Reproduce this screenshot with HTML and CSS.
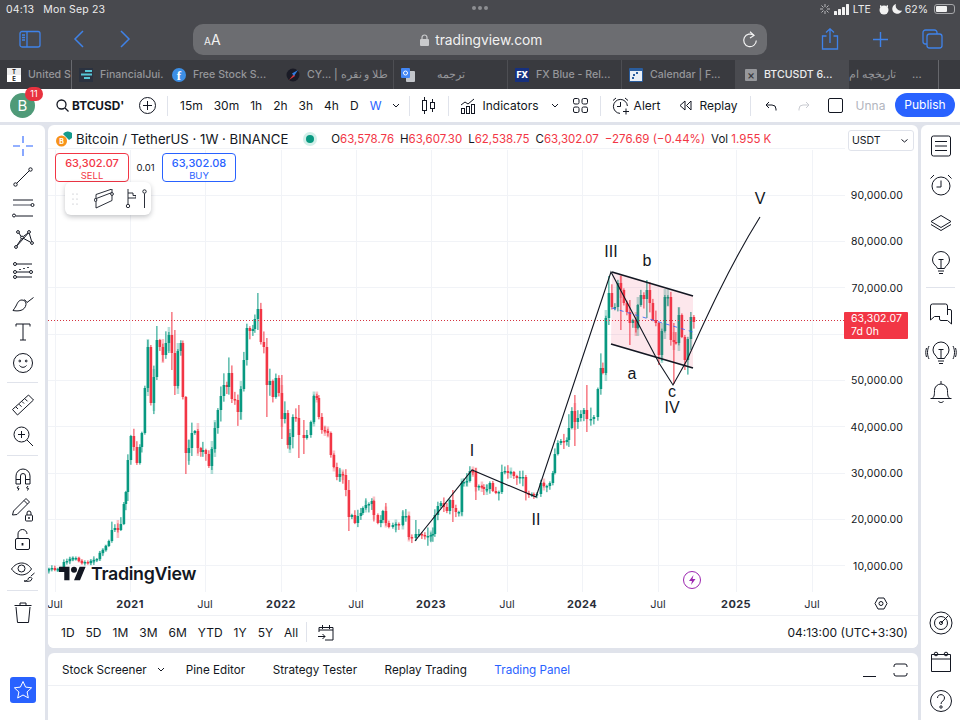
FILE: index.html
```html
<!DOCTYPE html>
<html lang="en">

<head>
    <meta charset="UTF-8">
    <meta name="viewport" content="width=device-width, initial-scale=1.0">
    <title>BTCUSDT chart</title>
    <link rel="stylesheet" href="styles.css">
</head>

<body>
    <div class="status-bar">
        <div class="status-time"><span>04:13</span><span>Mon Sep 23</span></div>
        <div class="status-dots"><i></i><i></i><i></i></div>
        <div class="status-right">
            <svg width="12" height="12" viewBox="0 0 12 12" stroke="#b8b9bc" stroke-width="1"><path d="M6 1v3M6 8v3M1 6h3M8 6h3M2.5 2.5l2 2M7.500 7.500l2 2M2.500 9.500l2-2M7.500 4.500l2-2"/></svg>
            <svg width="16" height="11" viewBox="0 0 16 11" fill="#f2f2f2"><rect x="0" y="7" width="3" height="4" rx=".5"/><rect x="4" y="5" width="3" height="6" rx=".5"/><rect x="8" y="3" width="3" height="8" rx=".5"/><rect x="12" y="0" width="3" height="11" rx=".5"/></svg>
            <span>LTE</span>
            <svg class="status-alarm" width="10" height="11" viewBox="0 0 10 11" fill="#f2f2f2"><circle cx="5" cy="6" r="4.500"/><path d="M1 1l2 1-2 2zM9 1l-2 1 2 2z"/></svg>
            <svg width="10" height="10" viewBox="0 0 10 10" fill="#f2f2f2"><path d="M4 0a5 5 0 1 0 6 6.500A5 5 0 0 1 4 0z"/></svg>
            <span>62%</span>
            <span class="battery"><i></i></span>
        </div>
    </div>

    <div class="safari-bar">
        <div class="safari-nav">
            <svg class="safari-sidebar" width="24" height="19" viewBox="0 0 24 19" fill="none" stroke="#3f82e8" stroke-width="1.300"><rect x="1" y="1.500" width="20" height="15.500" rx="2"/><path d="M8 1.500v15.500M3 5h3M3 7.500h3M3 10h3"/></svg>
            <svg class="safari-back" width="12" height="18" viewBox="0 0 12 18" fill="none" stroke="#3f82e8" stroke-width="1.500"><path d="M10 1L2 9l8 8"/></svg>
            <svg class="safari-forward" width="12" height="18" viewBox="0 0 12 18" fill="none" stroke="#3f82e8" stroke-width="1.500"><path d="M2 1l8 8-8 8"/></svg>
        </div>
        <div class="url-pill">
            <span class="url-aa"><small>A</small>A</span>
            <span class="url-host">
                <svg width="9" height="12" viewBox="0 0 9 12"><path d="M2 5V3.500a2.500 2.500 0 0 1 5 0V5" fill="none" stroke="#c9cacc" stroke-width="1.200"/><rect y="5" width="9" height="7" rx="1" fill="#c9cacc"/></svg>
                tradingview.com
            </span>
            <svg width="16" height="17" viewBox="0 0 16 17" fill="none" stroke="#f2f2f2" stroke-width="1.200"><path d="M12 4.500A6.300 6.300 0 1 0 14.300 9.500"/><path d="M8 .8l4 3.700-4 2.500"/></svg>
        </div>
        <div class="safari-actions">
            <svg width="18" height="22" viewBox="0 0 18 22" fill="none" stroke="#3f82e8" stroke-width="1.300"><path d="M5.500 8H1.500v13h15V8h-4M9 15V1M5 4.500L9 .8l4 3.700"/></svg>
            <svg width="17" height="17" viewBox="0 0 17 17" stroke="#3f82e8" stroke-width="1.400"><path d="M8.500 1v15M1 8.500h15"/></svg>
            <svg width="21" height="20" viewBox="0 0 21 20" fill="none" stroke="#3f82e8" stroke-width="1.300"><rect x="5" y="5" width="15" height="14" rx="2.500"/><path d="M5 15H3.500A2.500 2.500 0 0 1 1 12.500v-9A2.500 2.500 0 0 1 3.500 1h9A2.500 2.500 0 0 1 15 3.500V5"/></svg>
        </div>
    </div>

    <div class="tab-strip">
        <div class="tab tab-first">
            <span class="fav fav-te"><b>T</b><b>E</b></span>
            <span class="tab-text">United S</span>
        </div>
        <div class="tab tab-narrow">
            <svg class="fav" width="14" height="14" viewBox="0 0 14 14"><rect width="14" height="14" fill="#2b3240"/><path d="M6 2h7v2H6zM2 5.500h11v2H2zM5 9h6v2H5z" fill="#58c6d6"/></svg>
            <span class="tab-text">FinancialJui.</span>
        </div>
        <div class="tab tab-noline">
            <span class="fav fav-f">f</span>
            <span class="tab-text">Free Stock S...</span>
        </div>
        <div class="tab tab-noline">
            <svg class="fav" width="14" height="14" viewBox="0 0 14 14"><circle cx="7" cy="7" r="6.500" fill="#1a1b26"/><path d="M3 12L8 6l1 2z" fill="#e0343a"/><path d="M12 2L6 5.500 8 8z" fill="#2f7de1"/></svg>
            <span class="tab-text">CY... | طلا و نقره</span>
        </div>
        <div class="tab">
            <svg class="fav" width="14" height="14" viewBox="0 0 14 14"><rect x="5" y="3" width="9" height="11" rx="1" fill="#c3c6cb"/><rect width="9" height="10" rx="1" fill="#4286f5"/><circle cx="4.500" cy="5" r="2" fill="none" stroke="#fff"/></svg>
            <span class="tab-text tab-center">ترجمه</span>
        </div>
        <div class="tab">
            <span class="fav fav-fx">FX</span>
            <span class="tab-text">FX Blue - Rel...</span>
        </div>
        <div class="tab">
            <svg class="fav" width="14" height="14" viewBox="0 0 14 14"><rect width="14" height="14" rx="1" fill="#2a5d9e"/><rect x="1" y="3" width="12" height="10" fill="#e8eef6"/><path d="M4 6h2v2H4zM7 4h2v2H7zM3 9h2v2H3z" fill="#2a5d9e"/></svg>
            <span class="tab-text">Calendar | F...</span>
        </div>
        <div class="tab tab-active">
            <span class="fav fav-close">×</span>
            <span class="tab-text">BTCUSDT 6...</span>
        </div>
        <div class="tab tab-last">
            <span class="tab-text tab-clip" dir="rtl">تاریخچه ام</span>
            <span class="tab-text">...</span>
        </div>
    </div>

    <div class="tv-toolbar">
        <div class="avatar">B<span class="avatar-badge">11</span></div>
        <div class="symbol">
            <svg width="13" height="13" viewBox="0 0 13 13" fill="none" stroke="#131722" stroke-width="1.300"><circle cx="5.500" cy="5.500" r="4.500"/><path d="M9 9l3.500 3.500"/></svg>
            <span class="symbol-name">BTCUSD'</span>
        </div>
        <svg class="tb-plus" width="17" height="17" viewBox="0 0 17 17" fill="none" stroke="#131722"><circle cx="8.500" cy="8.500" r="8"/><path d="M8.500 4v9M4 8.500h9"/></svg>
        <i class="tb-sep tb-sep-first"></i>
        <div class="intervals">
            <span>15m</span><span>30m</span><span>1h</span><span>2h</span><span>3h</span><span>4h</span><span>D</span><span class="is-active">W</span>
        </div>
        <svg class="tb-chevron" width="8" height="5" viewBox="0 0 8 5" fill="none" stroke="#131722"><path d="M1 1l3 3 3-3"/></svg>
        <i class="tb-sep tb-sep-a"></i>
        <svg class="tb-candles" width="13" height="19" viewBox="0 0 13 19" fill="none" stroke="#131722"><rect x=".5" y="4.500" width="4" height="10"/><path d="M2.500 1v3.500M2.500 14.500V18"/><rect x="8.500" y="6.500" width="4" height="6"/><path d="M10.500 3v3.500M10.500 12.500V16"/></svg>
        <i class="tb-sep tb-sep-b"></i>
        <svg class="tb-indicators" width="16" height="16" viewBox="0 0 16 16" fill="none" stroke="#131722"><path d="M1 7l4-3 3 2 6-5"/><rect x="1.500" y="10.500" width="3" height="5"/><rect x="6.500" y="8.500" width="3" height="7"/><rect x="11.500" y="6.500" width="3" height="9"/></svg>
        <span class="tb-label tb-indicators-label">Indicators</span>
        <svg class="tb-chevron tb-chevron-b" width="8" height="5" viewBox="0 0 8 5" fill="none" stroke="#131722"><path d="M1 1l3 3 3-3"/></svg>
        <svg class="tb-grid" width="15" height="15" viewBox="0 0 15 15" fill="none" stroke="#131722"><rect x=".5" y=".5" width="5.500" height="5.500" rx="1.500"/><rect x="9" y=".5" width="5.500" height="5.500" rx="1.500"/><rect x=".5" y="9" width="5.500" height="5.500" rx="1.500"/><rect x="9" y="9" width="5.500" height="5.500" rx="1.500"/></svg>
        <i class="tb-sep tb-sep-c"></i>
        <svg class="tb-alert" width="18" height="18" viewBox="0 0 18 18" fill="none" stroke="#131722"><path d="M8 16.400A7 7 0 1 1 15.400 9"/><path d="M8.500 5v4.500H5M1 3.500L4 1M16 3.500L13 1M14 11.500v6M11 14.500h6"/></svg>
        <span class="tb-label tb-alert-label">Alert</span>
        <svg class="tb-replay" width="13" height="11" viewBox="0 0 13 11" fill="none" stroke="#131722"><path d="M6 1L1 5.500 6 10zM12 1L7.500 5.500 12 10z"/></svg>
        <span class="tb-label tb-replay-label">Replay</span>
        <i class="tb-sep tb-sep-d"></i>
        <svg class="tb-undo" width="12" height="10" viewBox="0 0 12 10" fill="none" stroke="#131722"><path d="M4 1L1 4l3 3M1 4h6a4 4 0 0 1 4 4v1.500"/></svg>
        <svg class="tb-redo" width="12" height="10" viewBox="0 0 12 10" fill="none" stroke="#c9cbd1"><path d="M8 1l3 3-3 3M11 4H5a4 4 0 0 0-4 4v1.500"/></svg>
        <span class="tb-square"></span>
        <span class="tb-unnamed">Unna</span>
        <span class="publish">Publish</span>
    </div>

    <div class="workspace">
        <aside class="left-tools">
            <div class="tool tool-active"><svg viewBox="0 0 28 28"><path d="M14 4v7M14 17v7M4 14h7M17 14h7"/></svg></div>
            <div class="tool"><svg viewBox="0 0 28 28"><circle cx="6.500" cy="21.500" r="1.700"/><circle cx="21.500" cy="6.500" r="1.700"/><path d="M7.700 20.300L20.300 7.700"/></svg></div>
            <div class="tool"><svg viewBox="0 0 28 28"><path d="M4 6h20M7 22h17"/><path class="tool-grey" d="M4 11h18"/><circle cx="23.500" cy="11" r="1.500"/><circle cx="5" cy="21.500" r="1.500"/></svg></div>
            <div class="tool"><svg viewBox="0 0 28 28"><circle cx="9" cy="7" r="1.400"/><circle cx="20" cy="7" r="1.400"/><circle cx="13" cy="12.500" r="1.400"/><circle cx="7" cy="22" r="1.400"/><circle cx="23" cy="18" r="1.400"/><path d="M10 8l2 3.500M12.300 14L7.700 20.800M14.300 11.500L19 8M20.300 8.400L22.700 16.600M14.300 13.300L21.700 17.300M8 20.800L19.200 8.200"/></svg></div>
            <div class="tool"><svg viewBox="0 0 28 28"><circle cx="6" cy="8" r="1.500"/><circle cx="6" cy="16" r="1.500"/><circle cx="22" cy="16" r="1.500"/><circle cx="6" cy="21" r="1.500"/><path d="M7.500 8H23M7.500 16h13M7.500 21H23"/><path d="M10 13.500h2M14 12.500h2M18 11.500h2" stroke-width=".8"/></svg></div>
            <div class="tool"><svg viewBox="0 0 28 28"><path d="M4 23.500c5 1 12 .5 13-6 .3-2-1-4.500-4-4.500-3.500 0-4.500 3-6 6-.7 1.500-2 3-3 4.500zM15.500 12.500l2.500 3 6.500-5"/></svg></div>
            <div class="tool"><svg viewBox="0 0 28 28"><path d="M7 8.500V6h14v2.500M14 6v16M11 22h6"/></svg></div>
            <div class="tool"><svg viewBox="0 0 28 28"><circle cx="14" cy="14" r="9.500"/><circle cx="10.800" cy="12" r=".9"/><circle cx="17.200" cy="12" r=".9"/><path d="M10.500 16.500c1.800 2.400 5.200 2.400 7 0"/></svg></div>
            <i class="tool-sep"></i>
            <div class="tool"><svg viewBox="0 0 28 28"><path d="M3.500 18.500L19.500 4l5 5-16 15zM7 16l2 2M10 13.200l2.500 2.500M13 10.500l2 2M16 7.800l2.500 2.500"/></svg></div>
            <div class="tool"><svg viewBox="0 0 28 28"><circle cx="12.500" cy="12.500" r="7.500"/><path d="M12.500 9v7M9 12.500h7M18 18l6 6"/></svg></div>
            <i class="tool-sep"></i>
            <div class="tool"><svg viewBox="0 0 28 28"><path d="M7 20V12a7 7 0 0 1 14 0v8h-4.500v-8a2.500 2.500 0 0 0-5 0v8zM7 15.500h4.500M16.500 15.500H21M9.500 22l-1.500 2 2 .5-1 2M19 22l-1.500 2 2 .5-1 2"/></svg></div>
            <div class="tool"><svg viewBox="0 0 28 28"><path d="M3.500 20l1-4L17 3.500l3.500 3.500L8 19.500zM15 5.500l3.500 3.500"/><rect x="16.500" y="20" width="7" height="6" rx="1"/><path d="M18 20v-2a2 2 0 0 1 4 0v2"/><circle cx="20" cy="23" r=".6"/></svg></div>
            <div class="tool"><svg viewBox="0 0 28 28"><rect x="6.500" y="12.500" width="14" height="11" rx="1.500"/><path d="M9 12.500V8a4.500 4.500 0 0 1 9 0"/><path d="M13.500 17v2.500" stroke-width="1.800"/></svg></div>
            <div class="tool"><svg viewBox="0 0 28 28"><path d="M2.500 12c5.500-8 15-8 20 0-2 3-4.500 5-7.500 5.700-5 1-9.500-1.500-12.500-5.700z"/><circle cx="12.500" cy="11.500" r="3.500"/><path d="M15 24c2.500.5 4.200-1 4.500-3l2-1 1.500 1.500-1 2c-1.500 1-4 1-6.500.5zM22 19l3.500-3"/></svg></div>
            <i class="tool-sep"></i>
            <div class="tool"><svg viewBox="0 0 28 28"><path d="M7 8l1.500 15.500h11L21 8M5.500 6.500h17M11 6.500V4h6v2.500"/></svg></div>
            <div class="star-btn"><svg width="20" height="20" viewBox="0 0 20 20" fill="none" stroke="#fff"><path d="M10 1.500l2.600 5.600 6 .7-4.500 4.100 1.200 6L10 15l-5.300 3 1.200-6L1.400 7.800l6-.7z"/></svg></div>
        </aside>

        <main class="center">
            <section class="chart-pane">
                <svg class="chart" id="chart" viewBox="48 125 870 491" width="870" height="491">
                    <g class="grid">
                        <path d="M55.500 150V592M130.500 150V592M205.500 150V592M281.500 150V592M356.500 150V592M431.500 150V592M507.500 150V592M582.500 150V592M658.500 150V592M736.500 150V592M812.500 150V592"/>
                        <path d="M48 148.500H845M48 195.500H845M48 241.500H845M48 287.500H845M48 334.500H845M48 380.500H845M48 426.500H845M48 473.500H845M48 519.500H845M48 565.500H845"/>
                    </g>
                    <path class="axis-line" d="M48 615.500H918"/>
                    <g id="candles"></g>
                    <path class="last-line" d="M48 320.500H845"/>

                    <polygon class="channel-fill" points="612,272 693,296 693,368 611,344"/>
                    <path class="channel-mid" d="M612 308L693 332"/>
                    <path class="channel-edge" d="M612 272L693 296M611 344L693 368"/>
                    <path class="wave" d="M415 541L472 470L536 497L611 272L659 363L673 385L687 360C705 320 730 265 760 217"/>

                    <g class="wave-labels">
                        <text x="472" y="456">I</text>
                        <text x="536" y="525">II</text>
                        <text x="611" y="257">III</text>
                        <text x="647" y="266">b</text>
                        <text x="632" y="379">a</text>
                        <text x="672" y="397">c</text>
                        <text x="672" y="413">IV</text>
                        <text x="760" y="204">V</text>
                    </g>

                    <g class="price-axis">
                        <text x="903" y="199">90,000.00</text>
                        <text x="903" y="245">80,000.00</text>
                        <text x="903" y="292">70,000.00</text>
                        <text x="903" y="384">50,000.00</text>
                        <text x="903" y="431">40,000.00</text>
                        <text x="903" y="477">30,000.00</text>
                        <text x="903" y="523">20,000.00</text>
                        <text x="903" y="570">10,000.00</text>
                    </g>
                    <rect class="price-tag" x="844" y="312" width="64" height="27" rx="1"/>
                    <g class="price-tag-text">
                        <text x="851" y="322">63,302.07</text>
                        <text x="851" y="335">7d 0h</text>
                    </g>

                    <g class="time-axis">
                        <text x="55" y="608">Jul</text>
                        <text class="year" x="130" y="608">2021</text>
                        <text x="205" y="608">Jul</text>
                        <text class="year" x="281" y="608">2022</text>
                        <text x="356" y="608">Jul</text>
                        <text class="year" x="431" y="608">2023</text>
                        <text x="507" y="608">Jul</text>
                        <text class="year" x="582" y="608">2024</text>
                        <text x="658" y="608">Jul</text>
                        <text class="year" x="736" y="608">2025</text>
                        <text x="812" y="608">Jul</text>
                    </g>

                    <circle class="bolt-ring" cx="692" cy="580" r="8.500"/>
                    <path class="bolt" d="M693.500 575L689 581h3l-1 4 4.500-6h-3z"/>
                    <path class="gear" d="M878 598h6l3 5.500-3 5.500h-6l-3-5.500z"/>
                    <circle class="gear" cx="881" cy="603.500" r="2"/>
                </svg>

                <div class="legend">
                    <svg class="coin" width="17" height="17" viewBox="0 0 17 17"><path d="M7 4a6 6 0 0 1 9-1v5l-3 2z" fill="#139a8b"/><circle cx="5.500" cy="11" r="5.500" fill="#f7931a"/><text x="5.500" y="13.500" class="coin-b">B</text></svg>
                    <span class="legend-title">Bitcoin / TetherUS · 1W · BINANCE</span>
                    <span class="legend-dot"></span>
                    <span class="ohlc">
                        <span>O<b>63,578.76</b></span>
                        <span>H<b>63,607.30</b></span>
                        <span>L<b>62,538.75</b></span>
                        <span>C<b>63,302.07</b></span>
                        <b>−276.69 (−0.44%)</b>
                        <span>Vol <b>1.955 K</b></span>
                    </span>
                </div>
                <div class="currency">USDT<svg width="7" height="4" viewBox="0 0 7 4" fill="none" stroke="#131722"><path d="M.5.500l3 2.500 3-2.500"/></svg></div>

                <div class="trade-box">
                    <div class="trade-btn trade-sell"><b>63,302.07</b><span>SELL</span></div>
                    <span class="trade-spread">0.01</span>
                    <div class="trade-btn trade-buy"><b>63,302.08</b><span>BUY</span></div>
                </div>
                <div class="draw-float">
                    <svg width="6" height="12" viewBox="0 0 6 12" fill="#a9acb4"><circle cx="1" cy="1" r=".6"/><circle cx="5" cy="1" r=".6"/><circle cx="1" cy="6" r=".6"/><circle cx="5" cy="6" r=".6"/><circle cx="1" cy="11" r=".6"/><circle cx="5" cy="11" r=".6"/></svg>
                    <svg class="draw-channel" width="20" height="20" viewBox="0 0 20 20" fill="none" stroke="#131722" stroke-width=".9"><path d="M2 5.500L18 0v11.500L2 19zM18 3.500L1 10"/><circle cx="18" cy="5" r="1.400" fill="#fff"/><circle cx="1.500" cy="11" r="1.400" fill="#fff"/></svg>
                    <svg class="draw-flag" width="11" height="19" viewBox="0 0 11 19" fill="none" stroke="#131722" stroke-width=".9"><path d="M3 0v15M3 4h5v2.500h3V9H3"/><circle cx="3" cy="17" r="1.700"/></svg>
                    <svg class="draw-pin" width="5" height="19" viewBox="0 0 5 19" fill="none" stroke="#131722" stroke-width=".9"><circle cx="2.500" cy="2.500" r="1.700"/><path d="M2.500 4.500V19"/></svg>
                </div>
                <div class="tv-logo">
                    <svg width="27" height="15" viewBox="0 3 36 20" fill="#131722"><path d="M14 22H7V11H0V4h14zM28 22h-8l7.500-18h8z"/><circle cx="20" cy="8" r="4"/></svg>
                    <span>TradingView</span>
                </div>

                <div class="range-bar">
                    <span>1D</span><span>5D</span><span>1M</span><span>3M</span><span>6M</span><span>YTD</span><span>1Y</span><span>5Y</span><span>All</span>
                    <i class="range-sep"></i>
                    <svg width="16" height="17" viewBox="0 0 16 17" fill="none" stroke="#131722"><path d="M1 8V3.500h14v12.500H7M1 6h14M4.500 1v4M11.500 1v4M0 12.500h7M4.500 10L7 12.500 4.500 15"/></svg>
                    <span class="range-clock">04:13:00 (UTC+3:30)</span>
                </div>
            </section>

            <section class="panel">
                <div class="panel-tabs">
                    <span class="panel-tab panel-screener">Stock Screener</span>
                    <svg class="panel-chevron" width="8" height="5" viewBox="0 0 8 5" fill="none" stroke="#131722"><path d="M1 1l3 3 3-3"/></svg>
                    <span class="panel-tab">Pine Editor</span>
                    <span class="panel-tab">Strategy Tester</span>
                    <span class="panel-tab">Replay Trading</span>
                    <span class="panel-tab is-active">Trading Panel</span>
                    <i class="panel-min"></i>
                    <svg class="panel-max" width="15" height="14" viewBox="0 0 15 14" fill="none" stroke="#131722"><path d="M1 4V3a2 2 0 0 1 2-2h9a2 2 0 0 1 2 2v1M1 10v1a2 2 0 0 0 2 2h9a2 2 0 0 0 2-2v-1"/></svg>
                </div>
                <h2 class="panel-heading">Connect through trusted brokers</h2>
            </section>
        </main>

        <aside class="right-tools">
            <div class="rtool"><svg viewBox="0 0 24 24"><rect x="2.500" y="2" width="19" height="20" rx="2"/><path d="M6 7.500h12M6 12h12M6 16.500h12"/></svg></div>
            <div class="rtool"><svg viewBox="0 0 24 24"><circle cx="12" cy="13" r="9"/><path d="M12 7.500V14H7.500M1.500 5.500L5 2M22.500 5.500L19 2"/></svg></div>
            <div class="rtool"><svg viewBox="0 0 24 24"><path d="M12 3.500L22 9.500l-10 6-10-6zM2 12.500l10 6 10-6"/></svg></div>
            <div class="rtool"><svg viewBox="0 0 24 24"><path d="M8.500 17.500C8 15 3.500 13.500 3.500 9a8.500 8.500 0 0 1 17 0c0 4.500-4.500 6-5 8.500zM9 20h6M10 22.500h4M9.500 8.500h5M12 8.500v9"/></svg></div>
            <i class="rtool-sep"></i>
            <div class="rtool"><svg viewBox="0 0 24 24"><path d="M18.500 13V4a2 2 0 0 0-2-2H3.500a2 2 0 0 0-2 2v14l4-3.500h5"/><path d="M18.500 7.500H21a1.500 1.500 0 0 1 1.500 1.500v13l-4-3.500H12a1.500 1.500 0 0 1-1.500-1.500v-3"/></svg></div>
            <div class="rtool rtool-wide"><svg viewBox="0 0 32 24"><path d="M12.500 17.500C12 15 8 13.500 8 9a8 8 0 0 1 16 0c0 4.500-4 6-4.500 8.500zM13 20h6M14 22.500h4M13.500 8.500h5M16 8.500v9M4 5C2 9 2 14 4 18M1.500 7c-1 3-1 6 0 9M28 5c2 4 2 9 0 13M30.500 7c1 3 1 6 0 9"/></svg></div>
            <div class="rtool"><svg viewBox="0 0 24 24"><path d="M3 18.500c2-1 2.500-3 2.500-8a6.500 6.500 0 0 1 13 0c0 5 .5 7 2.500 8zM1.500 18.500h21M9.500 21c.5 2 4.500 2 5 0M12 1v3"/></svg></div>
            <div class="rtool rtool-radar"><svg viewBox="0 0 24 24"><circle cx="12" cy="12" r="11"/><circle cx="12" cy="12" r="6.500"/><circle cx="12" cy="12" r="1.500"/><path d="M12 12l7-7"/></svg></div>
            <div class="rtool"><svg viewBox="0 0 24 24"><path d="M2.500 4.500h19v17h-19zM2.500 9h19"/><circle cx="7" cy="4" r="1.800"/><circle cx="17" cy="4" r="1.800"/></svg></div>
            <div class="rtool"><svg viewBox="0 0 24 24"><circle cx="12" cy="12" r="10.500"/><path d="M8.500 9c0-4.500 7-4.500 7 0 0 3-3.500 3-3.500 6"/><circle cx="12" cy="18" r="1.200"/></svg></div>
        </aside>
    </div>

    <script src="chart.js"></script>
</body>

</html>
```

FILE: styles.css
```css
* {
    margin: 0;
    padding: 0;
    box-sizing: border-box;
    font-family: Inter, "Noto Sans", "Noto Sans CJK SC", sans-serif;
}

body {
    width: 960px;
    height: 720px;
    overflow: hidden;
    background-color: #e0e3eb;
    color: #131722;
    display: flex;
    flex-direction: column;
}

i {
    display: block;
}

/* ios status bar */
.status-bar {
    height: 18px;
    background-color: #48494e;
    color: #ececed;
    font-size: 10.5px;
    display: flex;
    align-items: center;
    padding: 0 5px 0 6px;
    position: relative;
}

.status-time {
    display: flex;
    gap: 9px;
    letter-spacing: 0.2px;
}

.status-dots {
    position: absolute;
    left: 472px;
    top: 6px;
    display: flex;
    gap: 2px;
}

.status-dots i {
    width: 4px;
    height: 4px;
    border-radius: 50%;
    background-color: #8d8e92;
}

.status-right {
    margin-left: auto;
    display: flex;
    align-items: center;
    gap: 3px;
}

.status-alarm {
    margin-left: 5px;
}

.battery {
    width: 21px;
    height: 10px;
    margin-left: 3px;
    border: 1px solid #a6a7aa;
    border-radius: 3px;
    padding: 1px;
}

.battery i {
    width: 62%;
    height: 100%;
    background-color: #f2f2f2;
    border-radius: 1px;
}

/* safari chrome */
.safari-bar {
    height: 42px;
    background-color: #48494e;
    display: flex;
    align-items: center;
}

.safari-nav {
    width: 193px;
    padding-left: 19px;
    display: flex;
    align-items: center;
}

.safari-back {
    margin-left: 30px;
}

.safari-forward {
    margin-left: 34px;
}

.url-pill {
    width: 574px;
    height: 31px;
    margin-top: 1px;
    background-color: #6c6d71;
    border-radius: 10px;
    display: flex;
    align-items: center;
    justify-content: space-between;
    padding: 0 9px 0 11px;
    color: #f2f2f2;
}

.url-aa {
    font-size: 14px;
}

.url-aa small {
    font-size: 10px;
}

.url-host {
    display: flex;
    align-items: center;
    gap: 6px;
    font-size: 13.8px;
}

.safari-actions {
    flex: 1;
    display: flex;
    align-items: center;
    padding-left: 54px;
    gap: 33px;
}

.tab-strip {
    height: 29px;
    background-color: #393a3f;
    display: flex;
    font-size: 10.6px;
    font-weight: 500;
    color: #95969a;
}

.tab {
    flex: 0 0 114px;
    display: flex;
    align-items: center;
    gap: 7px;
    padding-left: 7px;
    border-left: 1px solid #4d4e53;
    overflow: hidden;
    white-space: nowrap;
}

.tab-first {
    flex-basis: 71px;
    border-left: none;
}

.tab-narrow {
    flex-basis: 94px;
    border-left-color: #68696e;
}

.tab-noline {
    border-left: none;
}

.tab-center {
    margin-left: 15px;
}

.tab-active {
    background-color: #4a4b50;
    color: #ececed;
    border-left: none;
    padding-left: 10px;
}

.tab-last {
    flex-basis: 90px;
    border-left: none;
    border-right: 1px solid #66676c;
    padding-left: 0;
    gap: 16px;
}

.tab-clip {
    width: 47px;
    overflow: hidden;
}

.fav {
    flex: none;
    width: 14px;
    height: 14px;
}

.fav-te {
    display: flex;
    flex-direction: column;
    background-color: #ececed;
    color: #222;
    font-size: 6px;
    line-height: 7px;
    text-align: center;
}

.fav-te b + b {
    background-color: #fff;
}

.fav-f {
    border-radius: 50%;
    background-color: #3d8fe6;
    color: #fff;
    font-family: "Liberation Serif", serif;
    font-weight: 700;
    font-size: 13px;
    line-height: 15px;
    text-align: center;
}

.fav-fx {
    background-color: #16307f;
    color: #fff;
    font-size: 9px;
    font-weight: 800;
    line-height: 14px;
    text-align: center;
    letter-spacing: -0.5px;
}

.fav-close {
    width: 12px;
    height: 12px;
    background-color: #97989c;
    color: #3a3b40;
    font-size: 12px;
    line-height: 12px;
    text-align: center;
    border-radius: 1px;
}

/* tradingview header */
.tv-toolbar {
    height: 33px;
    flex: none;
    background-color: #fff;
    display: flex;
    align-items: center;
    font-size: 12px;
    position: relative;
}

.avatar {
    width: 25px;
    height: 25px;
    margin-left: 10px;
    border-radius: 50%;
    background-color: #4f9a78;
    color: #fff;
    font-size: 15px;
    line-height: 25px;
    text-align: center;
    position: relative;
}

.avatar-badge {
    position: absolute;
    left: 15px;
    top: -6px;
    width: 18px;
    height: 14px;
    border-radius: 8px;
    background-color: #e8323f;
    font-size: 9px;
    line-height: 14px;
}

.symbol {
    margin-left: 21px;
    display: flex;
    align-items: center;
    gap: 3px;
}

.symbol-name {
    width: 53px;
    font-weight: 700;
    font-size: 11.8px;
    white-space: nowrap;
}

.tb-plus {
    margin-left: 14px;
}

.tb-sep {
    width: 1px;
    height: 20px;
    background-color: #e0e3eb;
}

.tb-sep-first {
    margin-left: 11px;
}

.intervals {
    margin-left: 12px;
    display: flex;
    gap: 11px;
}

.is-active {
    color: #2962ff;
}

.tb-chevron {
    margin-left: 11px;
}

.tb-sep-a {
    margin-left: 9px;
}

.tb-candles {
    margin-left: 12px;
}

.tb-sep-b {
    margin-left: 13px;
}

.tb-indicators {
    margin-left: 11px;
}

.tb-indicators-label {
    margin-left: 6px;
}

.tb-chevron-b {
    margin-left: 12px;
}

.tb-grid {
    margin-left: 14px;
}

.tb-sep-c {
    margin-left: 12px;
}

.tb-alert {
    margin-left: 11px;
}

.tb-alert-label {
    margin-left: 4px;
}

.tb-replay {
    margin-left: 19px;
}

.tb-replay-label {
    margin-left: 7px;
}

.tb-sep-d {
    margin-left: 12px;
}

.tb-undo {
    margin-left: 14px;
}

.tb-redo {
    margin-left: 21px;
}

.tb-square {
    width: 15px;
    height: 15px;
    margin-left: 18px;
    border: 1px solid #131722;
    border-radius: 2px;
}

.tb-unnamed {
    margin-left: 13px;
    white-space: nowrap;
    color: #b2b5be;
}

.publish {
    position: absolute;
    left: 895px;
    top: 4px;
    width: 60px;
    height: 24px;
    border-radius: 12px;
    background-color: #2962ff;
    color: #fff;
    line-height: 24px;
    text-align: center;
}

/* main layout */
.workspace {
    flex: 1;
    min-height: 0;
    padding-top: 3px;
    display: flex;
    gap: 3px;
}

.left-tools {
    width: 45px;
    flex: none;
    padding-top: 5px;
    background-color: #fff;
    border-top-right-radius: 6px;
    display: flex;
    flex-direction: column;
    align-items: center;
}

.tool {
    width: 28px;
    height: 31px;
    flex: none;
    display: flex;
    align-items: center;
}

.tool svg {
    width: 28px;
    height: 28px;
    fill: none;
    stroke: #131722;
}

.tool-active svg {
    stroke: #2962ff;
    stroke-width: 1.1;
}

.tool-grey {
    stroke: #8b8e96;
    stroke-width: 1.6;
}

.tool-sep {
    width: 31px;
    height: 1px;
    flex: none;
    margin: 4px 0 6px;
    background-color: #e0e3eb;
}

.star-btn {
    width: 26px;
    height: 26px;
    margin-top: auto;
    margin-bottom: 17px;
    background-color: #2962ff;
    border-radius: 3px;
    display: flex;
    align-items: center;
    justify-content: center;
}

.center {
    width: 870px;
    flex: none;
    display: flex;
    flex-direction: column;
    gap: 5px;
}

.chart-pane {
    height: 523px;
    flex: none;
    position: relative;
    background-color: #fff;
    border-radius: 6px;
    overflow: hidden;
}

.chart {
    display: block;
}

.grid path {
    fill: none;
    stroke: #f1f3f7;
    stroke-width: 1;
}

.axis-line {
    stroke: #eef0f4;
    stroke-width: 1;
}

.last-line {
    fill: none;
    stroke: #d5323f;
    stroke-width: 1;
    stroke-dasharray: 1 2;
}

.channel-fill {
    fill: rgba(242, 54, 99, 0.12);
}

.channel-mid {
    stroke: #2962ff;
    stroke-width: 1;
    stroke-dasharray: 4 4;
    opacity: 0.8;
}

.channel-edge {
    stroke: #131722;
    stroke-width: 1.8;
}

.wave {
    fill: none;
    stroke: #131722;
    stroke-width: 1.1;
}

.wave-labels text {
    font-family: "Liberation Sans", sans-serif;
    font-size: 16px;
    text-anchor: middle;
    fill: #131722;
}

.price-axis text {
    font-size: 10.5px;
    text-anchor: end;
    fill: #131722;
    letter-spacing: 0.1px;
}

.price-tag {
    fill: #f23645;
}

.price-tag-text text {
    font-size: 10.5px;
    fill: #fff;
    letter-spacing: 0.1px;
}

.time-axis text {
    font-size: 11px;
    text-anchor: middle;
    fill: #2a2e39;
}

.time-axis .year {
    font-weight: 700;
    letter-spacing: 0.4px;
}

.bolt-ring {
    fill: none;
    stroke: #9c27b0;
    stroke-width: 1;
}

.bolt {
    fill: #9c27b0;
}

.gear {
    fill: none;
    stroke: #131722;
    stroke-width: 1;
}

.legend {
    position: absolute;
    left: 8px;
    top: 5px;
    display: flex;
    align-items: center;
    white-space: nowrap;
}

.coin {
    margin-right: 3px;
}

.coin-b {
    font-size: 7px;
    font-weight: 700;
    fill: #fff;
    text-anchor: middle;
}

.legend-title {
    font-size: 13.2px;
}

.legend-dot {
    width: 8px;
    height: 8px;
    margin-left: 18px;
    border-radius: 50%;
    background-color: #089981;
    box-shadow: 0 0 0 3px #d2efe9;
}

.ohlc {
    margin-left: 17px;
    display: flex;
    gap: 6px;
    font-size: 11.5px;
}

.ohlc b {
    font-weight: 400;
    color: #f23645;
}

.currency {
    position: absolute;
    left: 800px;
    top: 5px;
    width: 66px;
    height: 21px;
    padding: 0 5px 0 3px;
    border: 1px solid #e0e3eb;
    border-radius: 3px;
    background-color: #fff;
    font-size: 10.5px;
    display: flex;
    align-items: center;
    justify-content: space-between;
}

.trade-box {
    position: absolute;
    left: 7px;
    top: 28px;
    display: flex;
    align-items: center;
}

.trade-btn {
    width: 74px;
    height: 29px;
    border: 1px solid;
    border-radius: 4px;
    background-color: #fff;
    text-align: center;
    font-size: 9.5px;
    line-height: 11px;
    padding-top: 3px;
    display: flex;
    flex-direction: column;
}

.trade-btn b {
    font-size: 11px;
    font-weight: 500;
    line-height: 13px;
}

.trade-sell {
    border-color: #f23645;
    color: #f23645;
}

.trade-buy {
    border-color: #2962ff;
    color: #2962ff;
}

.trade-spread {
    width: 33px;
    font-size: 9.5px;
    text-align: center;
}

.draw-float {
    position: absolute;
    left: 17px;
    top: 57px;
    width: 86px;
    height: 33px;
    background-color: #fff;
    border-radius: 6px;
    box-shadow: 0 2px 5px rgba(19, 23, 34, 0.25);
    display: flex;
    align-items: center;
    padding-left: 7px;
}

.draw-channel {
    margin-left: 16px;
}

.draw-flag {
    margin-left: 11px;
}

.draw-pin {
    margin-left: 6px;
}

.tv-logo {
    position: absolute;
    left: 11px;
    top: 438px;
    display: flex;
    align-items: center;
    gap: 5px;
    font-size: 17.8px;
    font-weight: 600;
    letter-spacing: -0.3px;
}

.range-bar {
    position: absolute;
    left: 0;
    right: 0;
    bottom: 0;
    height: 32px;
    padding: 0 10px 0 13px;
    display: flex;
    align-items: center;
    gap: 11px;
    font-size: 12px;
    background-color: #fff;
}

.range-sep {
    width: 1px;
    height: 20px;
    margin-left: -3px;
    background-color: #e0e3eb;
}

.range-clock {
    margin-left: auto;
}

.panel {
    flex: 1;
    min-height: 0;
    background-color: #fff;
    border-radius: 6px 6px 0 0;
    overflow: hidden;
}

.panel-tabs {
    height: 33px;
    padding: 1px 0 0 14px;
    border-bottom: 1px solid #eef0f4;
    display: flex;
    align-items: center;
    gap: 27.5px;
    font-size: 11.7px;
    position: relative;
}

.panel-screener {
    margin-right: -17px;
}

.panel-chevron {
    margin-right: -7px;
}

.panel-min {
    width: 13px;
    height: 1px;
    margin-left: auto;
    margin-top: 13px;
    background-color: #131722;
}

.panel-max {
    margin-left: -10px;
    margin-right: 10px;
}

.panel-heading {
    margin-top: 30px;
    font-size: 20px;
    font-weight: 600;
    text-align: center;
}

/* right rail */
.right-tools {
    flex: 1;
    padding-top: 1px;
    background-color: #fff;
    border-top-left-radius: 6px;
    display: flex;
    flex-direction: column;
    align-items: center;
}

.rtool {
    height: 39px;
    flex: none;
    display: flex;
    align-items: center;
}

.rtool svg {
    width: 24px;
    height: 24px;
    fill: none;
    stroke: #131722;
    stroke-width: 1;
}

.rtool-wide svg {
    width: 32px;
}

.rtool-sep {
    width: 29px;
    height: 1px;
    flex: none;
    margin: 5px 0 6px;
    background-color: #e0e3eb;
}

.rtool-radar {
    margin-top: auto;
}
```

FILE: chart.js
```js
// weekly candles: [x, close] in chart pixels, each one opens at the previous close
const closes = [
    [48, 569], [51, 568], [54, 570], [57, 569], [60, 568], [63, 562], [66, 561], [69, 559], [72, 558], [75, 558],
    [78, 561], [81, 563], [84, 562], [87, 563], [90, 561], [93, 560], [96, 559], [99, 553], [102, 550], [105, 546],
    [108, 541], [111, 530], [114, 528], [117, 530], [120, 524], [123, 504], [125, 492], [127, 460], [130, 436], [133, 447],
    [136, 463], [139, 447], [141, 433], [144, 388], [147, 347], [150, 403], [153, 377], [156, 340], [159, 347], [162, 355],
    [165, 343], [168, 335], [171, 353], [174, 386], [177, 351], [180, 343], [182, 397], [185, 453], [188, 448], [191, 433],
    [194, 431], [197, 448], [200, 452], [202, 450], [205, 454], [208, 466], [211, 449], [214, 428], [217, 410], [220, 396],
    [223, 385], [226, 387], [228, 373], [231, 399], [234, 400], [237, 412], [240, 389], [243, 360], [246, 328], [249, 331],
    [252, 329], [254, 319], [257, 309], [260, 342], [263, 347], [266, 385], [269, 381], [272, 397], [275, 378], [278, 393],
    [281, 419], [284, 413], [287, 445], [289, 437], [292, 417], [295, 418], [298, 435], [303, 438], [306, 435], [310, 422],
    [313, 396], [316, 398], [318, 417], [321, 430], [324, 431], [327, 433], [330, 455], [333, 467], [336, 477], [339, 474],
    [342, 475], [345, 490], [348, 517], [351, 515], [354, 523], [357, 516], [360, 513], [362, 508], [365, 505], [368, 504],
    [371, 501], [373, 515], [377, 523], [380, 520], [382, 511], [385, 523], [388, 527], [392, 525], [395, 524], [398, 525],
    [402, 516], [405, 516], [408, 537], [411, 538], [415, 534], [418, 534], [421, 535], [424, 536], [427, 536], [430, 535],
    [432, 534], [434, 515], [437, 506], [440, 503], [443, 507], [446, 511], [449, 500], [452, 508], [455, 512], [458, 512],
    [461, 483], [463, 482], [466, 481], [469, 471], [472, 472], [475, 487], [478, 486], [481, 487], [483, 489], [486, 489],
    [489, 483], [492, 491], [495, 493], [498, 492], [501, 472], [504, 471], [507, 473], [510, 472], [513, 476], [516, 478],
    [519, 477], [522, 477], [525, 493], [528, 495], [531, 494], [533, 495], [536, 494], [540, 483], [543, 486], [546, 486],
    [549, 483], [552, 473], [554, 454], [557, 443], [560, 441], [563, 442], [566, 440], [568, 428], [571, 411], [574, 422],
    [577, 418], [580, 414], [583, 410], [586, 419], [590, 419], [593, 417], [597, 389], [600, 368], [602, 373], [605, 318],
    [608, 293], [611, 307], [614, 307], [617, 283], [620, 290], [623, 303], [626, 312], [629, 323], [632, 320], [635, 328],
    [637, 305], [640, 295], [643, 299], [646, 290], [649, 303], [652, 320], [655, 323], [658, 355], [661, 331], [664, 297],
    [667, 297], [670, 340], [673, 342], [675, 343], [678, 315], [681, 337], [684, 360], [687, 339], [690, 317], [693, 322]
];

// long wicks read off the chart: x -> [high, low]
const wicks = {
    147: [340, 392], 156: [326, 380], 171: [312, 370], 174: [330, 395], 185: [396, 474], 199: [430, 479],
    248: [303, 340], 257: [293, 330], 266: [338, 417], 281: [375, 439], 298: [405, 458], 303: [420, 454],
    348: [480, 531], 415: [520, 541], 452: [490, 522], 475: [468, 500], 574: [395, 446], 586: [385, 432],
    608: [276, 325], 620: [276, 330], 629: [300, 345], 646: [280, 318], 658: [322, 365], 673: [323, 384],
    684: [335, 370], 690: [312, 350]
};

const GREEN = "#089981";
const RED = "#f23645";

let seed = 17;
function rnd() {
    seed = (seed * 16807) % 2147483647;
    return seed / 2147483647;
}

function rect(x, y, w, h, fill, alpha) {
    const op = alpha ? ` opacity="${alpha}"` : "";
    return `<rect x="${x}" y="${y}" width="${w}" height="${h}" fill="${fill}"${op}/>`;
}

let html = "";
closes.forEach(([x, close], i) => {
    const open = i ? closes[i - 1][1] : close;
    const top = Math.min(open, close);
    const bot = Math.max(open, close, top + 1.5);
    const color = close <= open ? GREEN : RED;

    // wicks get longer as the price rises
    const reach = x < 110 ? 3 : x > 300 && x < 560 ? 9 : 16;
    let high = top - 1 - rnd() * rnd() * reach;
    let low = bot + 1 + rnd() * rnd() * reach;
    if (wicks[x]) {
        [high, low] = wicks[x];
    }

    if (rnd() < 0.22) {
        const pale = reach * 0.5;
        html += rect(x - 0.4, top - pale, 2.6, bot - top + pale * 2, color, 0.3);
    }
    html += rect(x + 0.4, high, 1, low - high, color);
    html += rect(x - 0.4, top, 2.6, bot - top, color);
});

document.getElementById("candles").innerHTML = html;
```
